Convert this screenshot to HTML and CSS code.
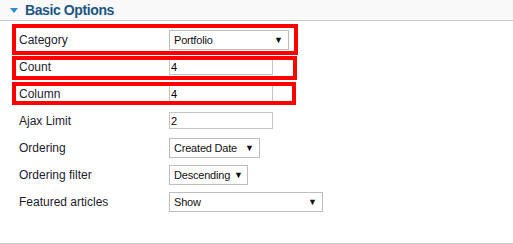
FILE: index.html
```html
<!DOCTYPE html>
<html lang="en">
<head>
    <title>Basic Options</title>
    <link rel="stylesheet" href="styles.css">
</head>
<body>
    <div class="panel">
        <div class="panel-head">
            <span class="caret"></span>
            <span class="panel-title">Basic Options</span>
        </div>
        <div class="panel-body">
            <div class="row">
                <label>Category</label>
                <div class="select w-cat"><span>Portfolio</span><span class="arrow">&#9660;</span></div>
            </div>
            <div class="row">
                <label>Count</label>
                <input type="text" class="field" value="4">
            </div>
            <div class="row">
                <label>Column</label>
                <input type="text" class="field" value="4">
            </div>
            <div class="row">
                <label>Ajax Limit</label>
                <input type="text" class="field" value="2">
            </div>
            <div class="row">
                <label>Ordering</label>
                <div class="select w-order"><span>Created Date</span><span class="arrow">&#9660;</span></div>
            </div>
            <div class="row">
                <label>Ordering filter</label>
                <div class="select w-filter"><span>Descending</span><span class="arrow">&#9660;</span></div>
            </div>
            <div class="row">
                <label>Featured articles</label>
                <div class="select w-feat"><span>Show</span><span class="arrow">&#9660;</span></div>
            </div>
        </div>
        <div class="mark mark-cat"></div>
        <div class="mark mark-count"></div>
        <div class="mark mark-col"></div>
    </div>
</body>
</html>
```

FILE: styles.css
```css
body {
    font-family: "Liberation Sans", Arial, sans-serif;
    background-color: #fff;
    margin: 0;
    padding: 0;
}

.panel {
    position: relative;
    height: 243px;
    border-bottom: 1px solid #ccc;
}

.panel-head {
    height: 20px;
    background-color: #f9f9f9;
    border-bottom: 1px solid #ccc;
    display: flex;
    align-items: center;
    padding-left: 10px;
}

.caret {
    width: 0;
    height: 0;
    border-left: 4px solid transparent;
    border-right: 4px solid transparent;
    border-top: 5px solid #2e8bd0;
    margin-right: 7px;
}

.panel-title {
    font-size: 14px;
    font-weight: bold;
    color: #1d5584;
    letter-spacing: -0.4px;
}

.panel-body {
    padding-top: 5px;
}

.row {
    display: flex;
    align-items: center;
    height: 27px;
    padding-left: 19px;
}

label {
    width: 150px;
    font-size: 12px;
    color: #1c1c2e;
}

.field {
    width: 104px;
    height: 17px;
    box-sizing: border-box;
    border: 1px solid #c4c4c4;
    padding: 0 1px;
    margin: 0;
    font-family: inherit;
    font-size: 11px;
    color: #000;
}

.select {
    height: 20px;
    box-sizing: border-box;
    border: 1px solid #bdbdbd;
    display: flex;
    align-items: center;
    justify-content: space-between;
    gap: 4px;
    padding: 0 5px 0 4px;
    font-size: 11px;
    letter-spacing: -0.2px;
    color: #111;
}

.arrow {
    font-size: 9px;
    letter-spacing: 0;
}

.w-cat { width: 120px; }
.w-order { width: 91px; }
.w-filter { width: 79px; }
.w-feat { width: 154px; }

.mark {
    position: absolute;
    left: 12px;
    border: 4px solid #f00;
    box-sizing: border-box;
}

.mark-cat { top: 24px; width: 286px; height: 31px; }
.mark-count { top: 56px; width: 285px; height: 24px; }
.mark-col { top: 82px; width: 284px; height: 23px; }
```
